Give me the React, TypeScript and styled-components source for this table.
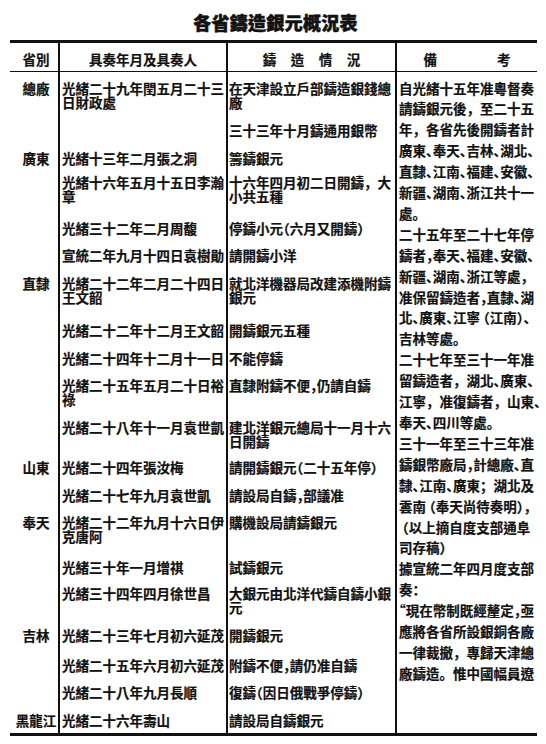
import React from 'react';
import styled, { createGlobalStyle } from 'styled-components';

const GlobalStyle = createGlobalStyle`
  html, body {
    margin: 0;
    padding: 0;
    background: #fff;
  }
  body {
    font-family: "Noto Sans CJK TC", "Noto Sans CJK SC", sans-serif;
    color: #111;
  }
`;

// half-width punctuation markers: ASCII stand-ins get the compressed glyph
const HALF: Record<string, string> = {
  '、': '、',
  ',': '，',
  ';': '；',
  ':': '：',
  '(': '（',
  ')': '）',
  '"': '“',
};
const FULL = '，。；（）：';

interface Row {
  h: number;
  who: string[];
  what: string[];
}

const rows: Row[] = [
  { h: 42, who: ['光緒二十九年閏五月二十三', '日財政處'], what: ['在天津設立戶部鑄造銀錢總', '廠'] },
  { h: 28, who: [], what: ['三十三年十月鑄通用銀幣'] },
  { h: 24, who: ['光緒十三年二月張之洞'], what: ['籌鑄銀元'] },
  { h: 46, who: ['光緒十六年五月十五日李瀚', '章'], what: ['十六年四月初二日開鑄，大', '小共五種'] },
  { h: 27, who: ['光緒三十二年二月周馥'], what: ['停鑄小元(六月又開鑄)'] },
  { h: 28, who: ['宣統二年九月十四日袁樹勛'], what: ['請開鑄小洋'] },
  { h: 47, who: ['光緒二十二年二月二十四日', '王文韶'], what: ['就北洋機器局改建添機附鑄', '銀元'] },
  { h: 28, who: ['光緒二十二年十二月王文韶'], what: ['開鑄銀元五種'] },
  { h: 27, who: ['光緒二十四年十二月十一日'], what: ['不能停鑄'] },
  { h: 42, who: ['光緒二十五年五月二十日裕', '祿'], what: ['直隸附鑄不便,仍請自鑄'] },
  { h: 40, who: ['光緒二十八年十一月袁世凱'], what: ['建北洋銀元總局十一月十六', '日開鑄'] },
  { h: 28, who: ['光緒二十四年張汝梅'], what: ['請開鑄銀元(二十五年停)'] },
  { h: 27, who: ['光緒二十七年九月袁世凱'], what: ['請設局自鑄,部議准'] },
  { h: 45, who: ['光緒二十二年九月十六日伊', '克唐阿'], what: ['購機設局請鑄銀元'] },
  { h: 26, who: ['光緒三十年一月增祺'], what: ['試鑄銀元'] },
  { h: 42, who: ['光緒三十四年四月徐世昌'], what: ['大銀元由北洋代鑄自鑄小銀', '元'] },
  { h: 30, who: ['光緒二十三年七月初六延茂'], what: ['開鑄銀元'] },
  { h: 27, who: ['光緒二十五年六月初六延茂'], what: ['附鑄不便,請仍准自鑄'] },
  { h: 28, who: ['光緒二十八年九月長順'], what: ['復鑄(因日俄戰爭停鑄)'] },
  { h: 29, who: ['光緒二十六年壽山'], what: ['請設局自鑄銀元'] },
];

const provinces = [
  { name: '總廠', row: 2, span: 2 },
  { name: '廣東', row: 4, span: 4 },
  { name: '直隸', row: 8, span: 5 },
  { name: '山東', row: 13, span: 2 },
  { name: '奉天', row: 15, span: 3 },
  { name: '吉林', row: 18, span: 3 },
  { name: '黑龍江', row: 21, span: 1 },
];

const notes = [
  '自光緒十五年准粵督奏',
  '請鑄銀元後，至二十五',
  '年，各省先後開鑄者計',
  '廣東、奉天、吉林、湖北、',
  '直隸、江南、福建、安徽、',
  '新疆、湖南、浙江共十一',
  '處。',
  '二十五年至二十七年停',
  '鑄者,奉天、福建、安徽、',
  '新疆、湖南、浙江等處,',
  '准保留鑄造者,直隸、湖',
  '北、廣東、江寧 (江南)、',
  '吉林等處。',
  '二十七年至三十一年准',
  '留鑄造者，湖北、廣東、',
  '江寧，准復鑄者，山東、',
  '奉天、四川等處。',
  '三十一年至三十三年准',
  '鑄銀幣廠局,計總廠、直',
  '隸、江南、廣東；湖北及',
  '雲南 (奉天尚待奏明),',
  ' (以上摘自度支部通阜',
  '司存稿)',
  '據宣統二年四月度支部',
  '奏:',
  '"現在幣制既經釐定,亟',
  '應將各省所設銀銅各廠',
  '一律裁撤，專歸天津總',
  '廠鑄造。惟中國幅員遼',
];

const Page = styled.div`
  width: 546px;
  height: 744px;
  padding: 12px 9px 0 10px;
  box-sizing: border-box;
  overflow: hidden;
`;

const Title = styled.h1`
  margin: 0 0 8px 4px;
  font-size: 18px;
  line-height: 20px;
  font-weight: 900;
  letter-spacing: 0.3px;
  text-align: center;
  -webkit-text-stroke: 0.5px #111;
`;

const Sheet = styled.div<{ $rows: string }>`
  display: grid;
  grid-template-columns: 48px 168px 169px 142px;
  grid-template-rows: ${p => p.$rows};
  border-top: 3px solid #111;
  border-bottom: 3px solid #111;
  font-size: 13.5px;
  font-weight: 700;
  -webkit-text-stroke: 0.2px #111;
`;

const HeadCell = styled.div<{ $col: number; $gap?: number }>`
  grid-row: 1;
  grid-column: ${p => p.$col};
  box-sizing: border-box;
  border-left: ${p => (p.$col > 1 ? '2px solid #111' : 'none')};
  border-bottom: 1.5px solid #111;
  display: flex;
  align-items: center;
  justify-content: center;
  gap: ${p => p.$gap ?? 0}px;
  padding: 3px 0 0 ${p => (p.$col === 1 ? 4 : 0)}px;
  line-height: 14px;
  white-space: nowrap;
`;

const ProvCell = styled.div<{ $row: number; $span: number }>`
  grid-column: 1;
  grid-row: ${p => p.$row} / span ${p => p.$span};
  padding: 8.5px 0 0 4px;
  text-align: center;
  line-height: 14px;
  white-space: nowrap;
`;

const EntryCell = styled.div<{ $row: number; $col: number }>`
  grid-row: ${p => p.$row};
  grid-column: ${p => p.$col};
  border-left: 2px solid #111;
  padding: 8.5px 0 0 ${p => (p.$col === 2 ? 2 : 1)}px;
  line-height: 14px;
  white-space: nowrap;
`;

const NoteCell = styled.div`
  grid-column: 4;
  grid-row: 2 / -1;
  border-left: 2px solid #111;
  padding: 5.5px 0 0 2px;
  line-height: 20.9px;
  white-space: nowrap;
`;

const Line = styled.div`
  white-space: pre;
`;

const Punct = styled.span<{ $half?: boolean }>`
  font-family: "Noto Sans CJK SC", sans-serif;
  font-feature-settings: ${p => (p.$half ? '"halt"' : 'normal')};
`;

function tx(s: string) {
  const out: React.ReactNode[] = [];
  let buf = '';
  [...s].forEach((ch, i) => {
    if (HALF[ch] || FULL.includes(ch)) {
      if (buf) {
        out.push(buf);
        buf = '';
      }
      out.push(
        <Punct key={i} $half={!!HALF[ch]}>
          {HALF[ch] ?? ch}
        </Punct>
      );
    } else buf += ch;
  });
  if (buf) out.push(buf);
  return out;
}

const spread = (s: string) => [...s].map((c, i) => <span key={i}>{c}</span>);

export default function App() {
  const template = ['29px', ...rows.map(r => `${r.h}px`)].join(' ');
  return (
    <>
      <GlobalStyle />
      <Page>
        <Title>各省鑄造銀元概況表</Title>
        <Sheet $rows={template}>
          <HeadCell $col={1}>省別</HeadCell>
          <HeadCell $col={2}>具奏年月及具奏人</HeadCell>
          <HeadCell $col={3} $gap={14.5}>{spread('鑄造情況')}</HeadCell>
          <HeadCell $col={4} $gap={60}>{spread('備考')}</HeadCell>

          {provinces.map(p => (
            <ProvCell key={p.name} $row={p.row} $span={p.span}>
              {p.name}
            </ProvCell>
          ))}

          {rows.map((r, i) => (
            <React.Fragment key={i}>
              <EntryCell $row={i + 2} $col={2}>
                {r.who.map((l, j) => (
                  <Line key={j}>{tx(l)}</Line>
                ))}
              </EntryCell>
              <EntryCell $row={i + 2} $col={3}>
                {r.what.map((l, j) => (
                  <Line key={j}>{tx(l)}</Line>
                ))}
              </EntryCell>
            </React.Fragment>
          ))}

          <NoteCell>
            {notes.map((l, j) => (
              <Line key={j}>{tx(l)}</Line>
            ))}
          </NoteCell>
        </Sheet>
      </Page>
    </>
  );
}
